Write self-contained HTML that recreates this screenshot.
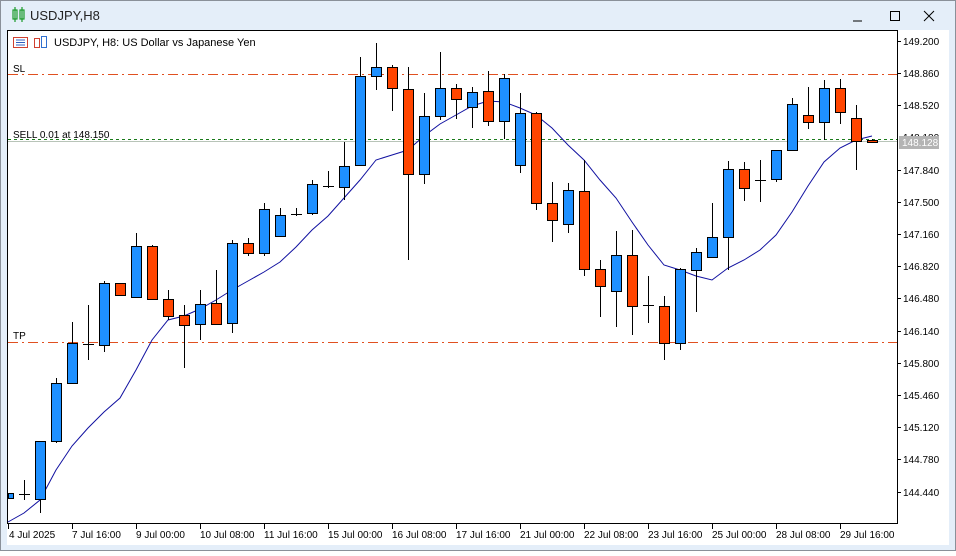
<!DOCTYPE html>
<html><head><meta charset="utf-8"><style>
html,body{margin:0;padding:0;background:#fff;}
body{width:956px;height:551px;overflow:hidden;font-family:"Liberation Sans",sans-serif;}
</style></head><body>
<svg width="956" height="551" xmlns="http://www.w3.org/2000/svg" font-family="Liberation Sans, sans-serif">
<rect x="0" y="0" width="956" height="551" fill="#e4eef9"/>
<rect x="0.5" y="0.5" width="955" height="550" fill="none" stroke="#8a9099"/>
<!-- title -->
<g stroke="#1a9a2a" fill="none" stroke-width="1.2"><rect x="13" y="10" width="4" height="9"/><line x1="15" y1="7" x2="15" y2="22"/><rect x="20" y="10" width="4" height="9"/><line x1="22" y1="7" x2="22" y2="22"/></g>
<text x="30" y="20" font-size="13" fill="#222">USDJPY,H8</text>
<line x1="853" y1="21" x2="862" y2="21" stroke="#000"/>
<rect x="890.5" y="11.5" width="9" height="9" fill="none" stroke="#000"/>
<path d="M924 11 L934 21 M934 11 L924 21" stroke="#000"/>
<!-- inner window -->
<rect x="7" y="30" width="942" height="515" fill="#fff"/>
<rect x="7.5" y="30.5" width="890" height="493" fill="none" stroke="#000"/>
<!-- header icons -->
<rect x="13.5" y="37.5" width="14" height="10" fill="#fff" stroke="#d04030"/>
<path d="M16 40h9M16 42.5h9M16 45h9" stroke="#3060c0"/>
<rect x="34.5" y="38.5" width="5" height="9" fill="#fff" stroke="#d04030"/>
<rect x="41.5" y="36.5" width="5" height="11" fill="#fff" stroke="#3070d0"/>
<text x="54" y="46" font-size="11" fill="#000">USDJPY, H8:  US Dollar vs Japanese Yen</text>
<!-- SL / TP / SELL lines -->
<text x="13" y="72" font-size="10" fill="#000">SL</text>
<line x1="8" y1="74.5" x2="897" y2="74.5" stroke="#e05020" stroke-dasharray="10,4,2,4"/>
<text x="13" y="339" font-size="10" fill="#000">TP</text>
<line x1="8" y1="342.5" x2="897" y2="342.5" stroke="#e05020" stroke-dasharray="10,4,2,4"/>
<text x="13" y="138" font-size="10" fill="#000">SELL 0.01 at 148.150</text>
<line x1="8" y1="139.5" x2="897" y2="139.5" stroke="#1a7a1a" stroke-dasharray="3,3"/>
<line x1="8" y1="141.5" x2="897" y2="141.5" stroke="#b8c4b8"/>
<!-- MA -->
<polyline fill="none" stroke="#1010a0" stroke-width="1" points="8,522 24,513 40,500 56,470 72,446 88,428 104,412 120,398 136,370 152,340 168,320 184,316 200,309 216,300 232,290 248,281 264,272 280,262 296,247 312,230 328,216 344,198 360,180 376,160 392,155 408,150 424,136 440,124 456,115 472,106 488,101 504,102 520,108 536,115 552,128 568,145 584,160 600,180 616,198 632,222 648,245 664,265 680,270 696,276 712,280 728,268 744,260 760,250 776,235 792,212 808,186 824,162 840,148 856,140 872,136"/>
<g stroke="#000" stroke-width="1">
<!-- wicks -->
<path d="M24.5 480V500M40.5 441V513M56.5 378V443M72.5 322V384M88.5 305V360M104.5 281V352M120.5 283V296M136.5 233V298M152.5 245V300M168.5 290V320M184.5 305V368M200.5 290V340M216.5 270V325M232.5 240V333M248.5 238V256M264.5 203V256M280.5 208V237M296.5 208V216M312.5 180V215M328.5 171V188M344.5 142V200M360.5 57V166M376.5 43V90M392.5 65V111M408.5 67V260M424.5 93V184M440.5 52V120M456.5 84V119M472.5 87V128M488.5 71V126M504.5 74V139M520.5 93V173M536.5 112V210M552.5 182V242M568.5 183V233M584.5 160V276M600.5 260V317M616.5 231V327M632.5 230V335M648.5 276V323M664.5 296V360M680.5 268V350M696.5 248V312M712.5 203V258M728.5 161V270M744.5 162V201M760.5 160V202M776.5 150V182M792.5 98V151M808.5 87V129M824.5 80V140M840.5 79V124M856.5 105V170M872.5 139V143"/>
<!-- dojis -->
<path d="M19 494.5h11M83 344.5h11M291 214.5h11M323 186.5h11M643 305.5h11M755 180.5h11"/>
</g>
<g stroke="#000" stroke-width="1" fill="#1e90ff">
<rect x="8.5" y="493.5" width="5" height="5"/>
<rect x="35.5" y="441.5" width="10" height="58"/>
<rect x="51.5" y="383.5" width="10" height="58"/>
<rect x="67.5" y="343.5" width="10" height="40"/>
<rect x="99.5" y="283.5" width="10" height="62"/>
<rect x="131.5" y="246.5" width="10" height="51"/>
<rect x="195.5" y="304.5" width="10" height="20"/>
<rect x="227.5" y="243.5" width="10" height="80"/>
<rect x="259.5" y="209.5" width="10" height="44"/>
<rect x="275.5" y="215.5" width="10" height="21"/>
<rect x="307.5" y="184.5" width="10" height="29"/>
<rect x="339.5" y="166.5" width="10" height="21"/>
<rect x="355.5" y="76.5" width="10" height="89"/>
<rect x="371.5" y="67.5" width="10" height="9"/>
<rect x="419.5" y="116.5" width="10" height="58"/>
<rect x="435.5" y="88.5" width="10" height="28"/>
<rect x="467.5" y="92.5" width="10" height="15"/>
<rect x="499.5" y="78.5" width="10" height="43"/>
<rect x="515.5" y="113.5" width="10" height="52"/>
<rect x="563.5" y="190.5" width="10" height="34"/>
<rect x="611.5" y="255.5" width="10" height="36"/>
<rect x="675.5" y="269.5" width="10" height="74"/>
<rect x="691.5" y="252.5" width="10" height="18"/>
<rect x="707.5" y="237.5" width="10" height="20"/>
<rect x="723.5" y="169.5" width="10" height="68"/>
<rect x="771.5" y="150.5" width="10" height="29"/>
<rect x="787.5" y="104.5" width="10" height="46"/>
<rect x="819.5" y="88.5" width="10" height="34"/>
</g>
<g stroke="#000" stroke-width="1" fill="#ff4500">
<rect x="115.5" y="283.5" width="10" height="12"/>
<rect x="147.5" y="246.5" width="10" height="53"/>
<rect x="163.5" y="299.5" width="10" height="17"/>
<rect x="179.5" y="315.5" width="10" height="10"/>
<rect x="211.5" y="303.5" width="10" height="21"/>
<rect x="243.5" y="243.5" width="10" height="10"/>
<rect x="387.5" y="67.5" width="10" height="21"/>
<rect x="403.5" y="89.5" width="10" height="85"/>
<rect x="451.5" y="88.5" width="10" height="11"/>
<rect x="483.5" y="91.5" width="10" height="30"/>
<rect x="531.5" y="113.5" width="10" height="90"/>
<rect x="547.5" y="203.5" width="10" height="17"/>
<rect x="579.5" y="191.5" width="10" height="78"/>
<rect x="595.5" y="269.5" width="10" height="17"/>
<rect x="627.5" y="255.5" width="10" height="51"/>
<rect x="659.5" y="306.5" width="10" height="37"/>
<rect x="739.5" y="169.5" width="10" height="19"/>
<rect x="803.5" y="115.5" width="10" height="7"/>
<rect x="835.5" y="88.5" width="10" height="24"/>
<rect x="851.5" y="118.5" width="10" height="23"/>
<rect x="867.5" y="140.5" width="10" height="2"/>
</g>
<!-- price axis -->
<g font-size="10" fill="#000">
<path d="M897 41.5h4M897 73.5h4M897 105.5h4M897 170.5h4M897 202.5h4M897 234.5h4M897 266.5h4M897 298.5h4M897 331.5h4M897 363.5h4M897 395.5h4M897 427.5h4M897 459.5h4M897 492.5h4" stroke="#000"/>
<text x="903" y="45">149.200</text>
<text x="903" y="77">148.860</text>
<text x="903" y="109">148.520</text>
<text x="903" y="141">148.180</text>
<text x="903" y="174">147.840</text>
<text x="903" y="206">147.500</text>
<text x="903" y="238">147.160</text>
<text x="903" y="270">146.820</text>
<text x="903" y="302">146.480</text>
<text x="903" y="335">146.140</text>
<text x="903" y="367">145.800</text>
<text x="903" y="399">145.460</text>
<text x="903" y="431">145.120</text>
<text x="903" y="463">144.780</text>
<text x="903" y="496">144.440</text>
<rect x="899" y="136" width="40" height="13" fill="#b4b4b4"/>
<text x="902" y="146" fill="#fff">148.128</text>
</g>
<!-- time axis -->
<g font-size="10" fill="#000">
<path d="M8.5 524v5M72.5 524v5M136.5 524v5M200.5 524v5M264.5 524v5M328.5 524v5M392.5 524v5M456.5 524v5M520.5 524v5M584.5 524v5M648.5 524v5M712.5 524v5M776.5 524v5M840.5 524v5" stroke="#000"/>
<text x="9" y="538">4 Jul 2025</text>
<text x="72" y="538">7 Jul 16:00</text>
<text x="136" y="538">9 Jul 00:00</text>
<text x="200" y="538">10 Jul 08:00</text>
<text x="264" y="538">11 Jul 16:00</text>
<text x="328" y="538">15 Jul 00:00</text>
<text x="392" y="538">16 Jul 08:00</text>
<text x="456" y="538">17 Jul 16:00</text>
<text x="520" y="538">21 Jul 00:00</text>
<text x="584" y="538">22 Jul 08:00</text>
<text x="648" y="538">23 Jul 16:00</text>
<text x="712" y="538">25 Jul 00:00</text>
<text x="776" y="538">28 Jul 08:00</text>
<text x="840" y="538">29 Jul 16:00</text>
</g>
</svg>
</body></html>
